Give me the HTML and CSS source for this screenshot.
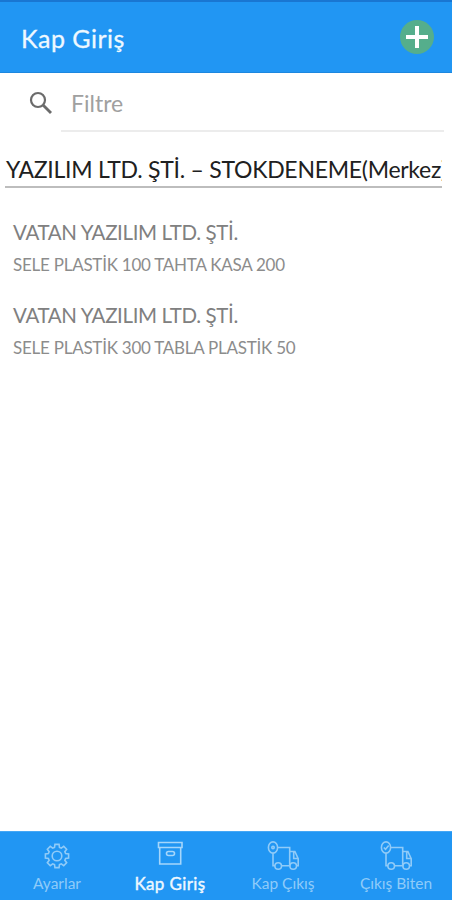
FILE: index.html
```html
<!DOCTYPE html>
<html lang="tr">
<head>
    <meta charset="UTF-8">
    <meta name="viewport" content="width=device-width, initial-scale=1">
    <title>Kap Giriş</title>
    <link rel="stylesheet" href="styles.css">
</head>
<body>
<div class="app">
    <header class="header">
        <h1 class="title">Kap Giriş</h1>
        <button class="add-btn" type="button" aria-label="Ekle">
            <svg width="34" height="34" viewBox="0 0 34 34">
                <circle cx="17" cy="17" r="17" fill="#55ae8c"/>
                <path d="M17 6v22M6 17h22" stroke="#fff" stroke-width="4"/>
            </svg>
        </button>
    </header>

    <div class="search">
        <svg class="search-icon" width="24" height="24" viewBox="0 0 24 24">
            <circle cx="9" cy="9" r="7" fill="none" stroke="#6b6b6b" stroke-width="2.2"/>
            <path d="M14 14l8 8" stroke="#6b6b6b" stroke-width="2.9"/>
        </svg>
        <div class="search-field">Filtre</div>
    </div>

    <div class="company">YAZILIM LTD. ŞTİ. – STOKDENEME(Merkez)</div>

    <ul class="list">
        <li>
            <p class="name">VATAN YAZILIM LTD. ŞTİ.</p>
            <p class="detail">SELE PLASTİK 100 TAHTA KASA 200</p>
        </li>
        <li>
            <p class="name">VATAN YAZILIM LTD. ŞTİ.</p>
            <p class="detail">SELE PLASTİK 300 TABLA PLASTİK 50</p>
        </li>
    </ul>

    <nav class="tabs">
        <a class="tab">
            <svg width="32" height="32" viewBox="-16 -16 32 32">
                <path d="M-2.5-8.6L-2.05-11.6H2.05L2.5-8.6L4.3-7.85L6.75-9.65L9.65-6.75L7.85-4.3L8.6-2.5L11.6-2.05V2.05L8.6 2.5L7.85 4.3L9.65 6.75L6.75 9.65L4.3 7.85L2.5 8.6L2.05 11.6H-2.05L-2.5 8.6L-4.3 7.85L-6.75 9.65L-9.65 6.75L-7.85 4.3L-8.6 2.5L-11.6 2.05V-2.05L-8.6-2.5L-7.85-4.3L-9.65-6.75L-6.75-9.65L-4.3-7.85Z"/>
                <circle r="4.8"/>
            </svg>
            <span>Ayarlar</span>
        </a>
        <a class="tab active">
            <svg width="32" height="32" viewBox="0 0 32 32">
                <path d="M4.5 2.5H28v5H4.5zM5.7 7.5V24h21V7.5"/>
                <rect x="12.5" y="11.5" width="8" height="4" rx="2"/>
            </svg>
            <span>Kap Giriş</span>
        </a>
        <a class="tab">
            <svg width="32" height="32" viewBox="0 0 32 32">
                <ellipse cx="6" cy="7.5" rx="4.6" ry="5.6"/>
                <circle cx="6" cy="7.5" r="1.2"/>
                <path d="M10.7 7.5h12v18.3h-8.3M6 13.2v12.6h2M22.7 11.5h5.2l3.3 7.2v7.1h-1.5M26.7 12v6.5h4"/>
                <circle cx="11.2" cy="26" r="3.3"/>
                <circle cx="26.2" cy="26" r="3.3"/>
            </svg>
            <span>Kap Çıkış</span>
        </a>
        <a class="tab">
            <svg width="32" height="32" viewBox="0 0 32 32">
                <ellipse cx="6" cy="7.5" rx="4.6" ry="5.6"/>
                <path d="M3.8 7.5l1.7 1.8 3.2-3.8"/>
                <path d="M10.7 7.5h12v18.3h-8.3M6 13.2v12.6h2M22.7 11.5h5.2l3.3 7.2v7.1h-1.5M26.7 12v6.5h4"/>
                <circle cx="11.2" cy="26" r="3.3"/>
                <circle cx="26.2" cy="26" r="3.3"/>
            </svg>
            <span>Çıkış Biten</span>
        </a>
    </nav>
</div>
</body>
</html>
```
FILE: styles.css
```css
* {
    box-sizing: border-box;
}

body {
    margin: 0;
    background: #fff;
    font-family: Lato, "Noto Sans", sans-serif;
}

.app {
    display: flex;
    flex-direction: column;
    height: 900px;
}

.header {
    display: flex;
    align-items: center;
    justify-content: space-between;
    height: 73px;
    padding: 2px 18px 0 21px;
    background: #2196f3;
    border-top: 2px solid #1976d2;
    border-bottom: 1px solid #1c87df;
}

.title {
    margin: 0;
    color: #eef8ff;
    font-size: 25px;
    font-weight: 400;
    letter-spacing: 0.5px;
    line-height: 32px;
    -webkit-text-stroke: 0.3px #eef8ff;
}

.add-btn {
    display: block;
    width: 34px;
    height: 34px;
    margin-top: -2px;
    padding: 0;
    border: none;
    background: none;
}

.add-btn svg {
    display: block;
}

.search {
    display: flex;
    height: 59px;
    padding: 0 8px 0 29px;
}

.search-icon {
    margin-top: 18px;
}

.search-field {
    flex: 1;
    margin-left: 8px;
    padding: 14px 0 0 10px;
    border-bottom: 2px solid #ececec;
    color: #a0a0a0;
    font-size: 23px;
    line-height: 32px;
}

.company {
    height: 56px;
    margin: 0 10px 0 5px;
    padding: 21px 0 0 1px;
    border-bottom: 2px solid #bdbdbd;
    overflow: hidden;
    color: #202020;
    font-size: 23px;
    letter-spacing: -0.27px;
    line-height: 32px;
    white-space: nowrap;
}

.list {
    flex: 1;
    margin: 0;
    padding: 27px 0 0 13px;
    list-style: none;
}

.list li {
    height: 83px;
}

.list p {
    margin: 0;
    white-space: nowrap;
}

.name {
    color: #808080;
    font-size: 20.5px;
    letter-spacing: -0.37px;
    line-height: 34px;
}

.detail {
    color: #8c8c8c;
    font-size: 17px;
    letter-spacing: -0.25px;
    line-height: 31px;
}

.tabs {
    display: flex;
    height: 69px;
    background: #2196f3;
    border-top: 1px solid #45a7f5;
}

.tab {
    display: flex;
    flex: 1;
    flex-direction: column;
    align-items: center;
    padding: 8px 0 0 1px;
    color: #8fcbf9;
    font-size: 15.5px;
    line-height: 23px;
    white-space: nowrap;
}

.tab svg {
    display: block;
    fill: none;
    stroke: #90cbf8;
    stroke-width: 1.6;
}

.tab.active {
    color: #eef8ff;
    font-size: 17px;
    letter-spacing: 0.4px;
    -webkit-text-stroke: 0.4px #eef8ff;
}

.tab.active svg {
    stroke: #a5d6fb;
}
```
